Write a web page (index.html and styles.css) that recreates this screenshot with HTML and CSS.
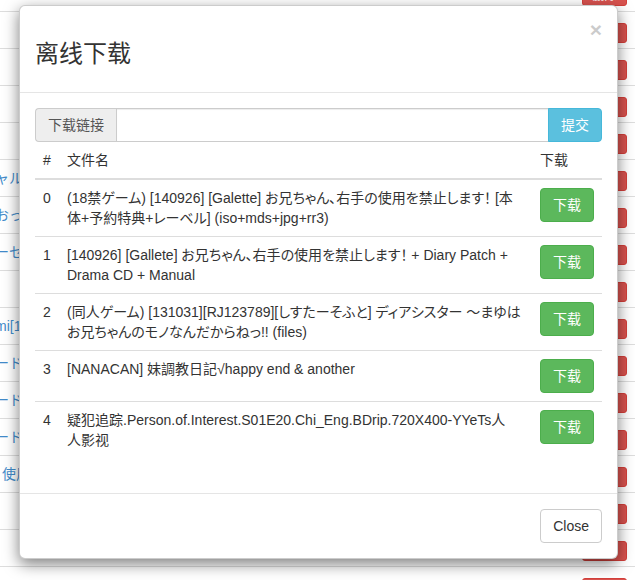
FILE: index.html
```html
<!DOCTYPE html>
<html lang="zh-CN">
<head>
<meta charset="utf-8">
<title>离线下载</title>
<link rel="stylesheet" href="styles.css">
</head>
<body>
<div class="page">
  <div class="bg-row"><span class="bg-link"></span><span class="bg-btn">删除</span></div>
  <div class="bg-row"><span class="bg-link"></span><span class="bg-btn">删除</span></div>
  <div class="bg-row"><span class="bg-link"></span><span class="bg-btn">删除</span></div>
  <div class="bg-row"><span class="bg-link"></span><span class="bg-btn">删除</span></div>
  <div class="bg-row"><span class="bg-link"></span><span class="bg-btn">删除</span></div>
  <div class="bg-row"><span class="bg-link">ャルー</span><span class="bg-btn">删除</span></div>
  <div class="bg-row"><span class="bg-link">おっぱ</span><span class="bg-btn">删除</span></div>
  <div class="bg-row"><span class="bg-link">ーセン</span><span class="bg-btn">删除</span></div>
  <div class="bg-row"><span class="bg-link"></span><span class="bg-btn">删除</span></div>
  <div class="bg-row"><span class="bg-link">mi[1</span><span class="bg-btn">删除</span></div>
  <div class="bg-row"><span class="bg-link">ードノ</span><span class="bg-btn">删除</span></div>
  <div class="bg-row"><span class="bg-link">ードノ</span><span class="bg-btn">删除</span></div>
  <div class="bg-row"><span class="bg-link">ードノ</span><span class="bg-btn">删除</span></div>
  <div class="bg-row"><span class="bg-link bg-link-flush">使用</span><span class="bg-btn">删除</span></div>
  <div class="bg-row"><span class="bg-link"></span><span class="bg-btn">删除</span></div>
  <div class="bg-row"><span class="bg-link"></span><span class="bg-btn">删除</span></div>
  <div class="bg-row"><span class="bg-link"></span><span class="bg-btn">删除</span></div>
</div>

<div class="modal">
  <div class="modal-header">
    <button class="close" type="button">×</button>
    <h3 class="modal-title">离线下载</h3>
  </div>
  <div class="modal-body">
    <div class="input-group">
      <span class="addon">下载链接</span>
      <input class="form-control" type="text">
      <button class="btn btn-info btn-append" type="button">提交</button>
    </div>
    <table class="table">
      <colgroup>
        <col class="col-num">
        <col class="col-name">
        <col class="col-action">
      </colgroup>
      <thead>
        <tr><th>#</th><th>文件名</th><th>下载</th></tr>
      </thead>
      <tbody>
        <tr><td>0</td><td><span class="line">(18禁ゲーム) [140926] [Galette] お兄ちゃん、右手の使用を禁止します！ [本</span><span class="line">体+予約特典+レーベル] (iso+mds+jpg+rr3)</span></td><td><button class="btn btn-success" type="button">下载</button></td></tr>
        <tr><td>1</td><td><span class="line">[140926] [Gallete] お兄ちゃん、右手の使用を禁止します！ + Diary Patch +</span><span class="line">Drama CD + Manual</span></td><td><button class="btn btn-success" type="button">下载</button></td></tr>
        <tr><td>2</td><td><span class="line">(同人ゲーム) [131031][RJ123789][しすたーそふと] ディアシスター 〜まゆは</span><span class="line">お兄ちゃんのモノなんだからねっ!! (files)</span></td><td><button class="btn btn-success" type="button">下载</button></td></tr>
        <tr><td>3</td><td><span class="line">[NANACAN] 妹調教日記√happy end &amp; another</span></td><td><button class="btn btn-success" type="button">下载</button></td></tr>
        <tr><td>4</td><td><span class="line">疑犯追踪.Person.of.Interest.S01E20.Chi_Eng.BDrip.720X400-YYeTs人</span><span class="line">人影视</span></td><td><button class="btn btn-success" type="button">下载</button></td></tr>
      </tbody>
    </table>
  </div>
  <div class="modal-footer">
    <button class="btn btn-default" type="button">Close</button>
  </div>
</div>
</body>
</html>
```
FILE: styles.css
```css
* { box-sizing: border-box; }

html, body {
  margin: 0;
  padding: 0;
  background: #fff;
}

body {
  font-family: "Liberation Sans", "Noto Sans CJK SC", sans-serif;
  font-size: 14px;
  line-height: 20px;
  color: #333;
  overflow: hidden;
  height: 580px;
}

/* background page */
.page {
  margin-top: -26px;
}

.bg-row {
  height: 37px;
  border-top: 1px solid #ddd;
  display: flex;
  justify-content: space-between;
  align-items: flex-start;
  padding: 8px 8px 0 0;
}

.bg-link {
  color: #428bca;
  margin-left: -5px;
  white-space: nowrap;
  line-height: 20px;
}

.bg-link-flush {
  margin-left: 2px;
}

.bg-btn {
  margin-top: 3px;
  width: 45px;
  height: 20px;
  background: #d9534f;
  border: 1px solid #d43f3a;
  border-radius: 3px;
  color: #fff;
  font-size: 12px;
  line-height: 18px;
  text-align: center;
}

/* modal */
.modal {
  position: absolute;
  left: 19px;
  top: 5px;
  width: 599px;
  background: #fff;
  border: 1px solid rgba(0, 0, 0, .2);
  border-radius: 6px;
  box-shadow: 0 5px 15px rgba(0, 0, 0, .5);
}

.modal-header {
  padding: 15px;
  border-bottom: 1px solid #e5e5e5;
}

.modal-header::after {
  content: "";
  display: block;
  clear: both;
}

.close {
  float: right;
  margin-top: -2px;
  padding: 0;
  border: 0;
  background: transparent;
  font-family: "Liberation Sans", sans-serif;
  font-size: 21px;
  font-weight: bold;
  line-height: 1;
  color: #000;
  opacity: .2;
  text-shadow: 0 1px 0 #fff;
  cursor: pointer;
}

.modal-title {
  margin: 20px 0 10px;
  font-size: 24px;
  font-weight: 400;
  line-height: 26px;
  color: #333;
}

.modal-body {
  padding: 15px;
}

.input-group {
  display: flex;
  height: 34px;
}

.addon {
  padding: 6px 12px;
  font-size: 14px;
  line-height: 20px;
  color: #555;
  background: #eee;
  border: 1px solid #ccc;
  border-right: 0;
  border-radius: 4px 0 0 4px;
  white-space: nowrap;
}

.form-control {
  flex: 1;
  min-width: 0;
  height: 34px;
  padding: 6px 12px;
  font: inherit;
  border: 1px solid #ccc;
  border-radius: 0;
  box-shadow: inset 0 1px 1px rgba(0, 0, 0, .075);
  outline: none;
}

.btn {
  display: inline-block;
  padding: 6px 12px;
  font-family: "Liberation Sans", "Noto Sans CJK SC", sans-serif;
  font-size: 14px;
  line-height: 20px;
  border: 1px solid transparent;
  border-radius: 4px;
  white-space: nowrap;
  cursor: pointer;
  vertical-align: middle;
}

.btn-append {
  margin-left: -1px;
  border-radius: 0 4px 4px 0;
}

.btn-info {
  color: #fff;
  background: #5bc0de;
  border-color: #46b8da;
}

.btn-success {
  color: #fff;
  background: #5cb85c;
  border-color: #4cae4c;
}

.btn-default {
  color: #333;
  background: #fff;
  border-color: #ccc;
}

.table {
  width: 100%;
  table-layout: fixed;
  border-collapse: collapse;
  border-spacing: 0;
  margin-bottom: 20px;
}

.col-num { width: 24px; }
.col-action { width: 70px; }

.table th,
.table td {
  padding: 8px;
  line-height: 20px;
  text-align: left;
  vertical-align: top;
  border-top: 1px solid #ddd;
}

.table th {
  font-weight: normal;
  vertical-align: bottom;
  border-top: 0;
  border-bottom: 2px solid #ddd;
}

.line {
  display: block;
  white-space: nowrap;
  font-feature-settings: "palt";
}

.modal-footer {
  padding: 15px;
  text-align: right;
  border-top: 1px solid #e5e5e5;
}
```
